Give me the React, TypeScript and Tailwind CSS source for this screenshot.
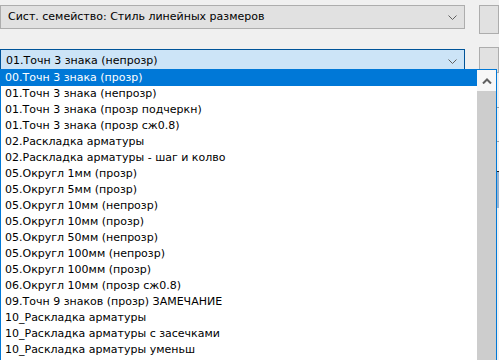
import React from "react";

const items = [
  "00.Точн 3 знака (прозр)",
  "01.Точн 3 знака (непрозр)",
  "01.Точн 3 знака (прозр подчеркн)",
  "01.Точн 3 знака (прозр сж0.8)",
  "02.Раскладка арматуры",
  "02.Раскладка арматуры - шаг и колво",
  "05.Округл 1мм (прозр)",
  "05.Округл 5мм (прозр)",
  "05.Округл 10мм (непрозр)",
  "05.Округл 10мм (прозр)",
  "05.Округл 50мм (непрозр)",
  "05.Округл 100мм (непрозр)",
  "05.Округл 100мм (прозр)",
  "06.Округл 10мм (прозр сж0.8)",
  "09.Точн 9 знаков (прозр) ЗАМЕЧАНИЕ",
  "10_Раскладка арматуры",
  "10_Раскладка арматуры с засечками",
  "10_Раскладка арматуры уменьш",
];

function Chevron() {
  return (
    <svg width="9" height="5" viewBox="0 0 9 5" className="shrink-0">
      <path d="M0.5 0.5 L4.5 4.5 L8.5 0.5" fill="none" stroke="#606060" strokeWidth="1" />
    </svg>
  );
}

export default function App() {
  const selected = 0;
  return (
    <div
      className="relative w-[499px] h-[360px] overflow-hidden bg-[#f0f0f0] text-[11px] text-black"
      style={{ fontFamily: '"DejaVu Sans", Verdana, sans-serif' }}
    >
      <div className="flex flex-col pt-[5px]">
        <div className="flex items-start">
          <div className="w-[471px] h-[24px] flex items-center justify-between pl-[7px] pr-[7px] bg-[#e1e1e1] border border-[#adadad]">
            <span>Сист. семейство: Стиль линейных размеров</span>
            <Chevron />
          </div>
          <div className="ml-[14px] w-[20px] h-[29px] bg-[#e1e1e1] border border-[#adadad]" />
        </div>
        <div className="flex items-start mt-[15px]">
          <div className="w-[471px] h-[25px] flex items-center justify-between pl-[5px] pr-[7px] bg-[#cce4f7] border border-[#005499]">
            <span>01.Точн 3 знака (непрозр)</span>
            <Chevron />
          </div>
          <div className="ml-[14px] -mt-[2px] w-[20px] h-[26px] bg-[#e1e1e1] border border-[#adadad]" />
        </div>
      </div>

      <div className="absolute left-[497px] top-[90px] w-[2px] h-[270px] flex flex-col">
        <div className="h-[18px] border-b border-[#a0a0a0]" />
        <div className="h-[34px] border-b border-[#a0a0a0]" />
        <div className="h-[30px] border-b border-[#202020] bg-[#f0f0f0]" />
        <div className="h-[36px] bg-[#99b4d1]" />
      </div>

      <div className="absolute left-0 top-[69px] w-[497px] h-[300px] bg-white border border-[#0078d7] flex">
        <div className="flex-1 flex flex-col">
          {items.map((t, i) => (
            <div
              key={i}
              className={`h-[16px] leading-[16px] pl-[4px] whitespace-nowrap ${i === selected ? "bg-[#0078d7] text-white" : ""}`}
            >
              {t}
            </div>
          ))}
        </div>
        <div className="w-[19px] flex flex-col bg-[#f0f0f0]">
          <div className="h-[21px] flex items-center justify-center bg-[#f7f7f7]">
            <svg width="10" height="6" viewBox="0 0 10 6">
              <path d="M1 5.5 L5 1.5 L9 5.5" fill="none" stroke="#606060" strokeWidth="2" />
            </svg>
          </div>
          <div className="flex-1 bg-[#cdcdcd]" />
        </div>
      </div>
    </div>
  );
}
